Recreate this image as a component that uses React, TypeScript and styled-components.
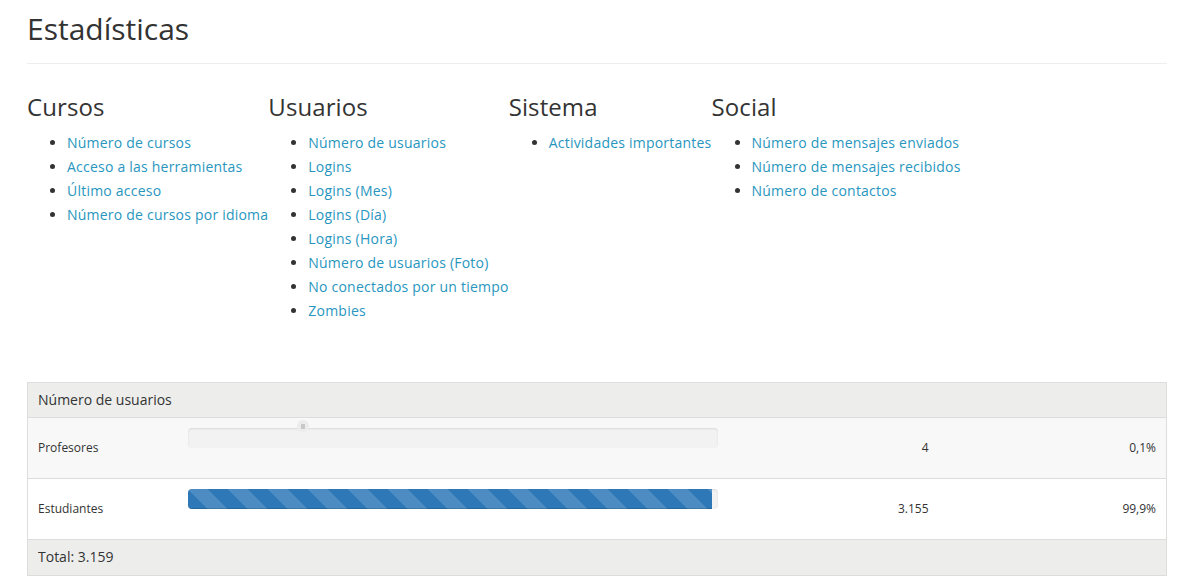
import styled, { createGlobalStyle } from "styled-components";

const GlobalStyle = createGlobalStyle`
html, body {
  margin: 0;
  padding: 0;
  background: #fff;
  font-family: "Open Sans", "Liberation Sans", sans-serif;
  color: #333;
}
* {
  box-sizing: border-box;
}
`;

const Page = styled.div`
  padding: 0 32px 0 27px;
`;

const Title = styled.h1`
  margin: 12px 0 0;
  font-size: 30px;
  font-weight: 400;
  line-height: 33px;
  color: #333;
`;

const Rule = styled.hr`
  margin: 18px 0 0;
  border: 0;
  border-top: 1px solid #eee;
`;

const Sections = styled.div`
  display: flex;
  align-items: flex-start;
  margin-top: 29px;
`;

const Section = styled.div`
  flex: none;
`;

const SectionTitle = styled.h3`
  margin: 0;
  font-size: 24px;
  font-weight: 400;
  line-height: 27px;
  letter-spacing: 0.1px;
  color: #333;
`;

const LinkList = styled.ul`
  margin: 11px 0 0;
  padding-left: 40px;
  list-style: disc;
`;

const Item = styled.li`
  font-size: 14px;
  line-height: 24px;
  color: #333;
  white-space: nowrap;
`;

const Link = styled.a`
  color: #2896be;
  text-decoration: none;
  letter-spacing: 0.22px;
`;

const Table = styled.table`
  width: 100%;
  margin-top: 59px;
  border-collapse: collapse;
  table-layout: fixed;
  border: 1px solid #ddd;
  font-size: 12px;
`;

const HeadCell = styled.th`
  height: 35px;
  padding: 0 10px 2px;
  background: #edeeec;
  border-bottom: 1px solid #ddd;
  font-size: 14px;
  font-weight: 400;
  text-align: left;
  color: #333;
`;

const Row = styled.tr<{ $striped?: boolean }>`
  background: ${(p) => (p.$striped ? "#f7f8f7" : "#fff")};
  border-bottom: 1px solid #ddd;
`;

const Cell = styled.td<{ $align?: "left" | "right" }>`
  padding: 9px 10px 11px;
  height: 61px;
  vertical-align: middle;
  text-align: ${(p) => p.$align ?? "left"};
  color: #333;
`;

const BarCell = styled.td`
  position: relative;
  padding: 10px;
  vertical-align: top;
`;

const Track = styled.div`
  height: 20px;
  margin-bottom: 20px;
  border-radius: 4px;
  background: #f2f2f2;
  box-shadow: inset 0 1px 2px rgba(0, 0, 0, 0.1);
  overflow: hidden;
`;

const Fill = styled.div`
  height: 100%;
  background-color: #2e78b7;
  background-image: linear-gradient(
    45deg,
    rgba(255, 255, 255, 0.15) 25%,
    transparent 25%,
    transparent 50%,
    rgba(255, 255, 255, 0.15) 50%,
    rgba(255, 255, 255, 0.15) 75%,
    transparent 75%,
    transparent
  );
  background-size: 40px 40px;
  box-shadow: inset 0 -1px 0 rgba(0, 0, 0, 0.15);
`;

const Knob = styled.span`
  position: absolute;
  left: 119px;
  top: 2px;
  width: 12px;
  height: 12px;
  border-radius: 50%;
  background: #ececec;
  &::after {
    content: "";
    position: absolute;
    left: 4px;
    top: 4px;
    width: 4px;
    height: 5px;
    background: #c8c8c8;
  }
`;

const FootCell = styled.td`
  height: 36px;
  padding: 0 10px 2px;
  background: #edeeec;
  font-size: 14px;
  color: #333;
`;

const sections = [
  {
    title: "Cursos",
    links: [
      "Número de cursos",
      "Acceso a las herramientas",
      "Último acceso",
      "Número de cursos por idioma",
    ],
  },
  {
    title: "Usuarios",
    links: [
      "Número de usuarios",
      "Logins",
      "Logins (Mes)",
      "Logins (Día)",
      "Logins (Hora)",
      "Número de usuarios (Foto)",
      "No conectados por un tiempo",
      "Zombies",
    ],
  },
  { title: "Sistema", links: ["Actividades importantes"] },
  {
    title: "Social",
    links: [
      "Número de mensajes enviados",
      "Número de mensajes recibidos",
      "Número de contactos",
    ],
  },
];

const rows = [
  { label: "Profesores", pct: 0, value: "4", share: "0,1%", knob: true },
  { label: "Estudiantes", pct: 98.9, value: "3.155", share: "99,9%", knob: false },
];

const App: React.FC = () => {
  return (
    <>
      <GlobalStyle />
      <Page>
        <Title>Estadísticas</Title>
        <Rule />
        <Sections>
          {sections.map((s) => (
            <Section key={s.title}>
              <SectionTitle>{s.title}</SectionTitle>
              <LinkList>
                {s.links.map((l) => (
                  <Item key={l}>
                    <Link href="#">{l}</Link>
                  </Item>
                ))}
              </LinkList>
            </Section>
          ))}
        </Sections>
        <Table>
          <colgroup>
            <col style={{ width: 150 }} />
            <col style={{ width: 550 }} />
            <col style={{ width: 211 }} />
            <col />
          </colgroup>
          <thead>
            <tr>
              <HeadCell colSpan={4}>Número de usuarios</HeadCell>
            </tr>
          </thead>
          <tbody>
            {rows.map((r, i) => (
              <Row key={r.label} $striped={i % 2 === 0}>
                <Cell>{r.label}</Cell>
                <BarCell>
                  {r.knob && <Knob />}
                  <Track>
                    <Fill style={{ width: `${r.pct}%` }} />
                  </Track>
                </BarCell>
                <Cell $align="right">{r.value}</Cell>
                <Cell $align="right">{r.share}</Cell>
              </Row>
            ))}
          </tbody>
          <tfoot>
            <tr>
              <FootCell colSpan={4}>Total: 3.159</FootCell>
            </tr>
          </tfoot>
        </Table>
      </Page>
    </>
  );
};

export default App;
